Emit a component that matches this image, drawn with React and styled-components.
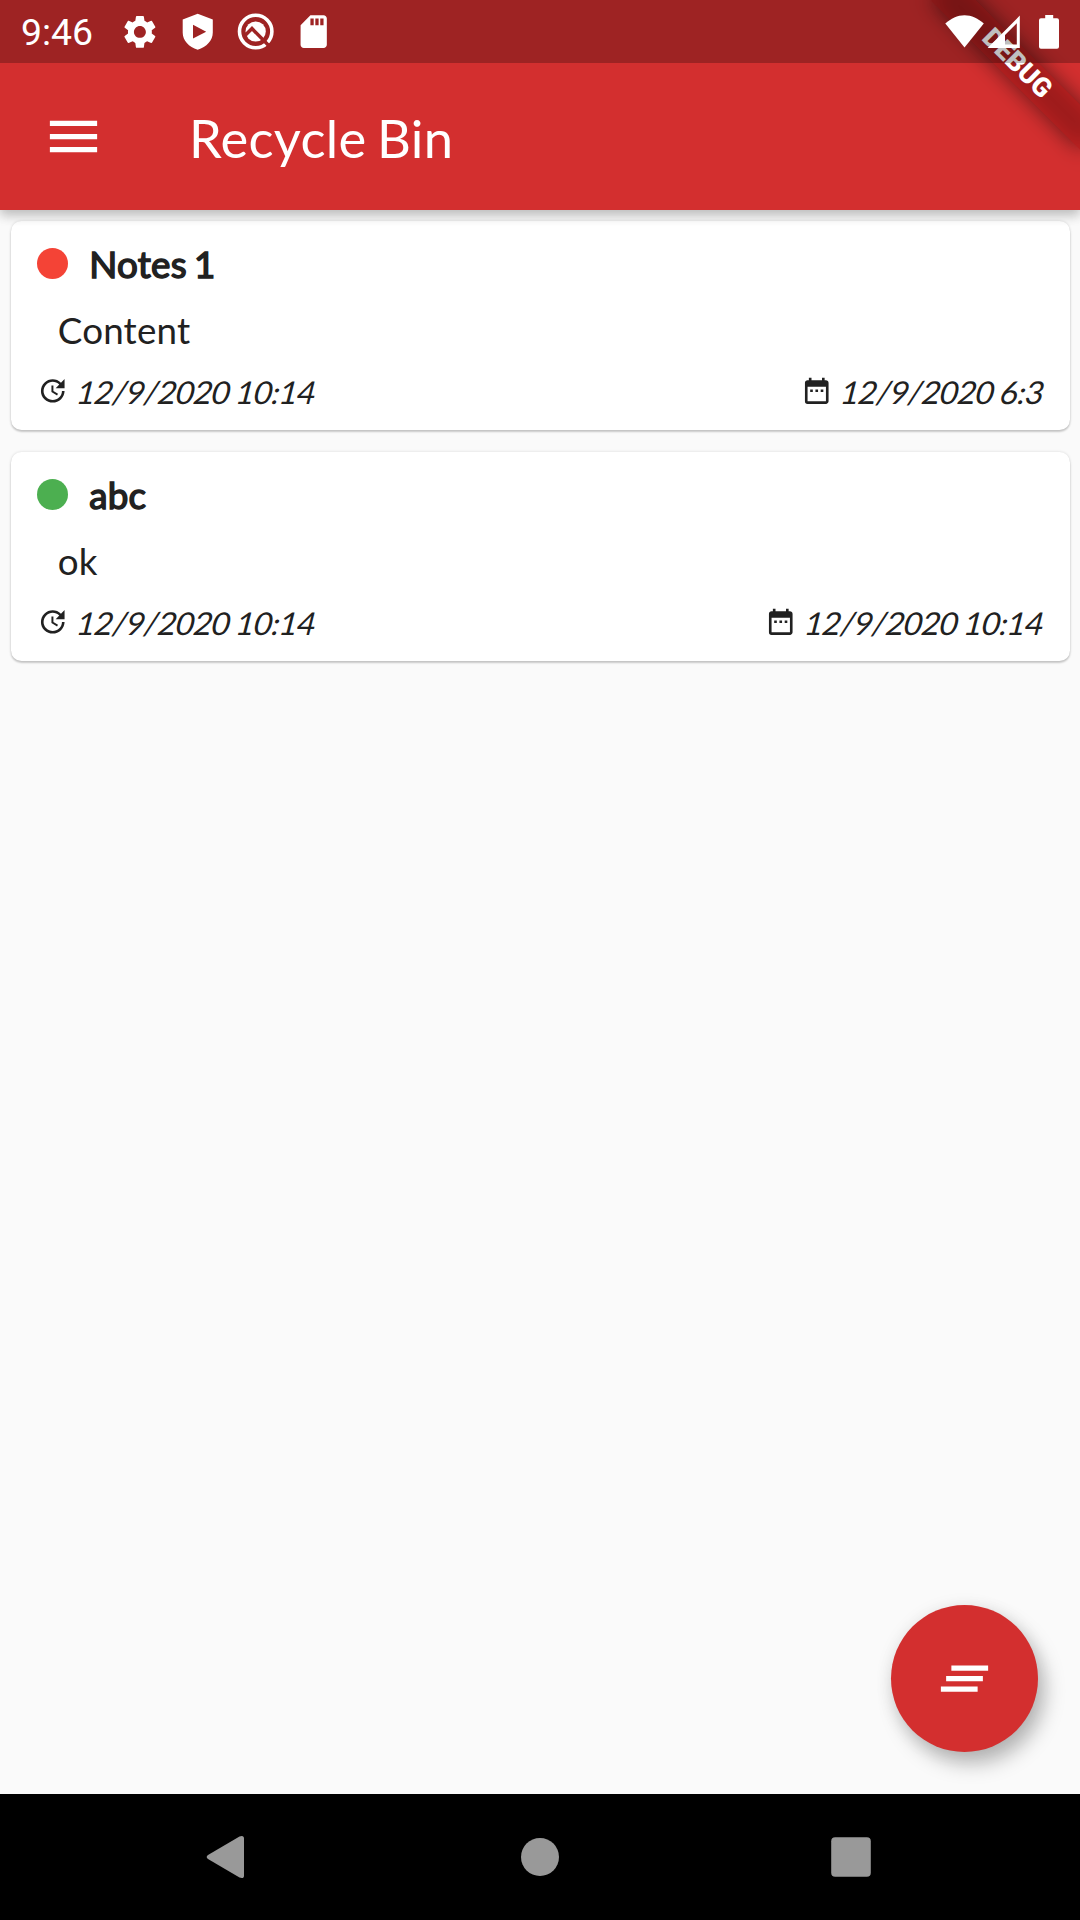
import React from "react";
import styled, { createGlobalStyle } from "styled-components";
import {
  MdSettings,
  MdSdCard,
  MdMenu,
  MdUpdate,
  MdDateRange,
  MdClearAll,
} from "react-icons/md";

const GlobalStyle = createGlobalStyle`
  *, *::before, *::after { box-sizing: border-box; }
  body { margin: 0; background: #fafafa; }
`;

const Screen = styled.div`
  position: relative;
  display: flex;
  flex-direction: column;
  width: 1080px;
  height: 1920px;
  overflow: hidden;
  background: #fafafa;
  color: #212121;
  font-family: Lato, "Liberation Sans", sans-serif;
`;

const Header = styled.header`
  position: relative;
  z-index: 2;
  flex: none;
  height: 210px;
  background: #d32f2f;
  box-shadow: 0 6px 10px rgba(0, 0, 0, 0.17), 0 2px 14px rgba(0, 0, 0, 0.12);
`;

const StatusBar = styled.div`
  position: relative;
  z-index: 2;
  display: flex;
  align-items: center;
  justify-content: space-between;
  height: 63px;
  padding: 0 21px;
  background: rgba(0, 0, 0, 0.25);
  color: #fff;
`;

const StatusGroup = styled.div`
  display: flex;
  align-items: center;
  gap: ${(p) => p.$gap}px;
`;

const Clock = styled.time`
  width: 80px;
  padding-top: 2px;
  font: 400 37.4px/43px Roboto, sans-serif;
`;

const StatusIcon = styled.svg`
  display: block;
  flex: none;
`;

const Toolbar = styled.div`
  display: flex;
  align-items: center;
  height: 147px;
  padding-left: 42px;
  color: #fff;
`;

const IconButton = styled.button`
  display: flex;
  align-items: center;
  width: 147px;
  padding: 0;
  border: 0;
  background: none;
  color: inherit;
`;

const Title = styled.h1`
  margin: 0;
  padding-top: 2px;
  font-size: 52.5px;
  font-weight: 400;
  line-height: 63px;
  letter-spacing: 0.3px;
  word-spacing: -3.2px;
`;

const BannerClip = styled.div`
  position: absolute;
  z-index: 1;
  top: 0;
  right: 0;
  width: 210px;
  height: 210px;
  overflow: hidden;
`;

const Banner = styled.div`
  position: absolute;
  top: 73.5px;
  left: 105px;
  width: 210px;
  height: 31.5px;
  transform: rotate(45deg);
  transform-origin: 105px -73.5px;
  color: #fff;
  font: 900 26.775px/31.5px Roboto, sans-serif;
  text-align: center;

  &::before {
    content: "";
    position: absolute;
    inset: 0;
    background: rgba(0, 0, 0, 0.5);
    filter: blur(10.4px);
  }
`;

const BannerLabel = styled.span`
  position: relative;
  display: block;
  background: rgba(183, 28, 28, 0.63);
`;

const NoteList = styled.main`
  display: flex;
  flex: 1;
  flex-direction: column;
  gap: 21.5px;
  padding: 10.5px;
`;

const Card = styled.article`
  display: flex;
  flex-direction: column;
  gap: 20.5px;
  height: 209.5px;
  padding: 21px 26.25px 20px;
  border-radius: 10.5px;
  background: #fff;
  box-shadow: 0 2px 2px rgba(0, 0, 0, 0.18), 0 0 3px rgba(0, 0, 0, 0.14);
`;

const CardHead = styled.div`
  display: flex;
  align-items: center;
  gap: 21px;
  height: 44px;
`;

const Dot = styled.span`
  width: 31.5px;
  height: 31.5px;
  border-radius: 50%;
  background: ${(p) => p.$color};
`;

const NoteTitle = styled.h2`
  margin: 0;
  font-size: 36.75px;
  font-weight: 400;
  line-height: 44px;
  letter-spacing: 0.26px;
  word-spacing: -2.5px;
  -webkit-text-stroke: 1.5px currentColor;
`;

const NoteBody = styled.p`
  height: 45.5px;
  margin: 0;
  padding: 1.5px 0 0 21px;
  font-size: 36.75px;
  line-height: 44px;
  letter-spacing: 0.2px;
`;

const CardFoot = styled.div`
  display: flex;
  justify-content: space-between;
  height: 38px;
`;

const Stamp = styled.div`
  display: flex;
  align-items: center;
  gap: 8.6px;
`;

const StampText = styled.span`
  padding-top: 2px;
  font-size: 31.5px;
  line-height: 38px;
  letter-spacing: -0.42px;
  word-spacing: -1px;
  white-space: nowrap;
  transform: skewX(-14deg);
  transform-origin: 0 24px;
`;

const Fab = styled.button`
  position: absolute;
  right: 42px;
  bottom: 168px;
  display: flex;
  align-items: center;
  justify-content: center;
  width: 147px;
  height: 147px;
  padding: 0;
  border: 0;
  border-radius: 50%;
  background: #d32f2f;
  color: #fff;
  box-shadow: 7px 12px 20px rgba(0, 0, 0, 0.26), 0 2px 18px rgba(0, 0, 0, 0.08);
`;

const NavBar = styled.nav`
  display: flex;
  flex: none;
  align-items: center;
  justify-content: center;
  gap: 237px;
  height: 126px;
  background: #000;
`;

const NavIcon = styled.svg`
  width: 74px;
  height: 74px;
  fill: #999;
`;

const notes = [
  { title: "Notes 1", body: "Content", color: "#f44336", updated: "12/9/2020 10:14", created: "12/9/2020 6:3" },
  { title: "abc", body: "ok", color: "#4caf50", updated: "12/9/2020 10:14", created: "12/9/2020 10:14" },
];

function Note({ title, body, color, updated, created }) {
  return (
    <Card>
      <CardHead>
        <Dot $color={color} />
        <NoteTitle>{title}</NoteTitle>
      </CardHead>
      <NoteBody>{body}</NoteBody>
      <CardFoot>
        <Stamp>
          <MdUpdate size={31.5} />
          <StampText>{updated}</StampText>
        </Stamp>
        <Stamp>
          <MdDateRange size={31.5} />
          <StampText>{created}</StampText>
        </Stamp>
      </CardFoot>
    </Card>
  );
}

export default function App() {
  return (
    <Screen>
      <GlobalStyle />
      <Header>
        <StatusBar>
          <StatusGroup $gap={18.6}>
            <Clock>9:46</Clock>
            <MdSettings size={39.8} />
            <StatusIcon width="39.4" height="39.4" viewBox="0 0 39.4 39.4" fill="#fff">
              <path
                fillRule="evenodd"
                d="M19.7 1.8 34.8 7.6V20.4C34.8 28.4 28.6 34.8 19.7 37.7 10.8 34.8 4.7 28.4 4.7 20.4V7.6ZM15 12.8V26.6L28.2 19.7Z"
              />
            </StatusIcon>
            <StatusIcon width="39.4" height="39.4" viewBox="0 0 39.4 39.4" fill="none">
              <circle cx="19.7" cy="19.5" r="16.2" stroke="#fff" strokeWidth="3.6" />
              <circle cx="19.7" cy="19.5" r="10.1" fill="#fff" />
              <path d="M9 23.6 16 16.6 33.2 34" stroke="#9e2323" strokeWidth="3.5" />
            </StatusIcon>
            <MdSdCard size={39.4} />
          </StatusGroup>
          <StatusGroup $gap={0}>
            <StatusIcon width="114" height="34" viewBox="945 14 114 34" fill="#fff">
              <path d="M945.3 22.6C950.8 17.4 957.5 14.2 964.5 14.2S978.3 17.4 983.8 22.6L964.5 46.6Z" />
              <path
                fillRule="evenodd"
                d="M987.6 46.9 1019.8 14.6V46.9ZM1005 43.6H1016.8V22.2L1005 34Z"
              />
              <path d="M1045.2 14H1053.2V17.3H1057Q1059 17.3 1059 19.3V45.7Q1059 47.7 1057 47.7H1041Q1039 47.7 1039 45.7V19.3Q1039 17.3 1041 17.3H1045.2Z" />
            </StatusIcon>
          </StatusGroup>
        </StatusBar>
        <Toolbar>
          <IconButton aria-label="Menu">
            <MdMenu size={63} />
          </IconButton>
          <Title>Recycle Bin</Title>
        </Toolbar>
        <BannerClip>
          <Banner>
            <BannerLabel>DEBUG</BannerLabel>
          </Banner>
        </BannerClip>
      </Header>
      <NoteList>
        {notes.map((note) => (
          <Note key={note.title} {...note} />
        ))}
      </NoteList>
      <NavBar>
        <NavIcon viewBox="0 0 74 74">
          <path d="M16 35 47.5 16.4Q52 14.8 52 18.6V55.4Q52 59.2 47.5 57.6L16 39Q13.4 37 16 35Z" />
        </NavIcon>
        <NavIcon viewBox="0 0 74 74">
          <circle cx="37" cy="37" r="19" />
        </NavIcon>
        <NavIcon viewBox="0 0 74 74">
          <rect x="17.2" y="17.2" width="39.6" height="39.6" rx="4" />
        </NavIcon>
      </NavBar>
      <Fab aria-label="Clear all">
        <MdClearAll size={63} />
      </Fab>
    </Screen>
  );
}
